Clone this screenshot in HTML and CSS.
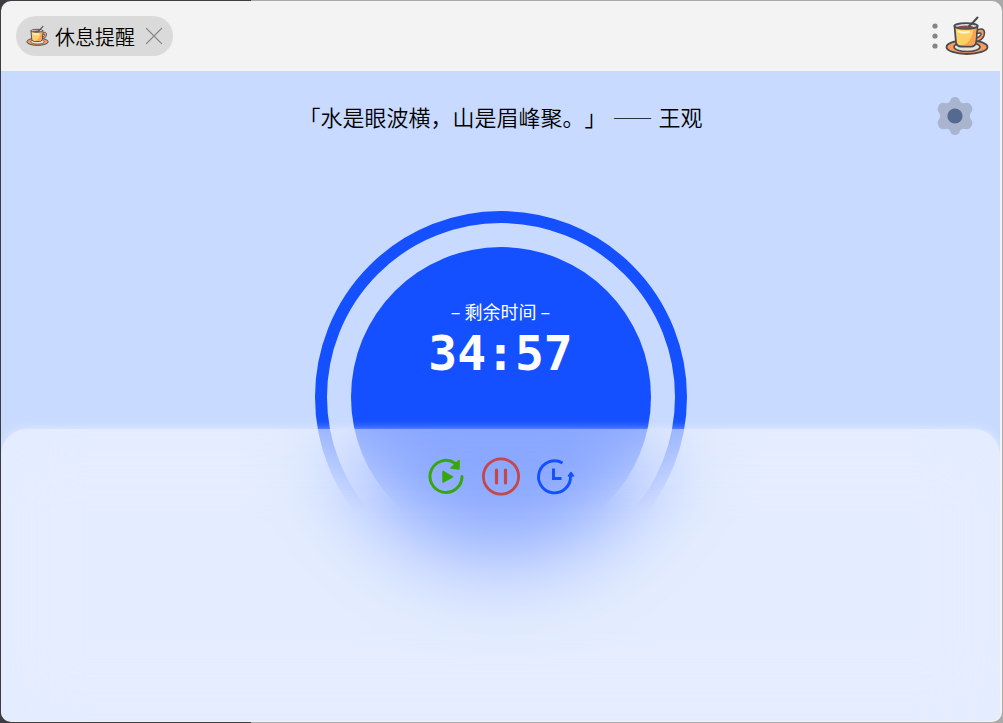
FILE: index.html
```
<!DOCTYPE html>
<html lang="zh-CN">
<head>
<meta charset="utf-8">
<meta name="viewport" content="width=device-width, initial-scale=1">
<title>休息提醒</title>
<link rel="stylesheet" href="styles.css">
</head>
<body>
<svg class="defs" aria-hidden="true">
  <symbol id="cup" viewBox="0 0 44 40">
    <ellipse cx="22" cy="31" rx="20.500" ry="7" fill="#f99b5c" stroke="#484b50" stroke-width="1.800"/>
    <ellipse cx="22" cy="31" rx="13" ry="4.500" fill="#e4e6d8" stroke="#484b50" stroke-width="1.500"/>
    <path d="M32 14.500Q34 12.500 37 13Q40.500 14 39 19.500Q37.500 24.500 31 25.500L31.500 22Q35 21 36 18.500Q36.500 16 32 17.500Z" fill="#f99b5c" stroke="#484b50" stroke-width="1.500"/>
    <path d="M9.500 10L11 26.500Q12 30.500 16 30.500H26Q30 30.500 31 26.500L32.500 10Z" fill="#ffd066" stroke="#484b50" stroke-width="1.800"/>
    <path d="M28.500 13L31.500 12.500L30 26.500Q29 29.500 26 29.500H18Q27 26 28.500 13Z" fill="#fba254"/>
    <ellipse cx="21" cy="10" rx="11.500" ry="2.800" fill="#dfe2dc" stroke="#484b50" stroke-width="1.800"/>
    <ellipse cx="20.500" cy="11" rx="8" ry="1.400" fill="#8a4b4b"/>
    <path d="M13.500 15.500Q18 17 24 16" fill="none" stroke="#fff8dc" stroke-width="2" stroke-linecap="round"/>
    <path d="M24 10L28 6.500L32.500 1.500" fill="none" stroke="#484b50" stroke-width="2" stroke-linecap="round"/>
  </symbol>
</svg>
<div class="window">
  <header class="titlebar">
    <div class="tab">
      <svg class="tab-icon" aria-hidden="true"><use href="#cup"/></svg>
      <span class="tab-title">休息提醒</span>
      <button class="icon-button" type="button" aria-label="关闭">
        <svg class="close-icon" viewBox="0 0 16 16"><path d="M1 1L15 15M15 1L1 15" stroke="#858585" stroke-width="1.200"/></svg>
      </button>
    </div>
    <div class="title-actions">
      <button class="icon-button" type="button" aria-label="更多">
        <svg class="more-icon" viewBox="0 0 6 26" fill="#858585"><circle cx="3" cy="3" r="2.600"/><circle cx="3" cy="13" r="2.600"/><circle cx="3" cy="23" r="2.600"/></svg>
      </button>
      <svg class="app-icon" aria-hidden="true"><use href="#cup"/></svg>
    </div>
  </header>
  <main class="content">
    <p class="quote">「水是眼波横，山是眉峰聚。」 <span class="dash">——</span> 王观</p>
    <button class="icon-button settings" type="button" aria-label="设置">
      <svg class="gear-icon" viewBox="0 0 38 40">
        <path d="M14.500 4Q15.500 1 19 1Q22.500 1 23.500 4Q25 8 29 7Q33.500 6 35.500 10Q37.500 14 35 16.500Q32.500 20 35 23.500Q37.500 26 35.500 30Q33.500 34 29 33Q25 32 23.500 36Q22.500 39 19 39Q15.500 39 14.500 36Q13 32 9 33Q4.500 34 2.500 30Q0.500 26 3 23.500Q5.500 20 3 16.500Q0.500 14 2.500 10Q4.500 6 9 7Q13 8 14.500 4Z" fill="#a9b4ce"/>
        <circle cx="19" cy="20" r="7.600" fill="#566a91"/>
      </svg>
    </button>
    <div class="ring">
      <div class="disc">
        <div class="label">– 剩余时间 –</div>
        <time class="time">34:57</time>
      </div>
    </div>
    <section class="panel" aria-label="计时控制">
      <div class="controls">
        <button class="icon-button" type="button" aria-label="开始">
          <svg class="control-icon" viewBox="0 0 40 40" fill="none" stroke="#36a80d" stroke-width="3" stroke-linecap="round">
            <path d="M35 19.500A16 16 0 1 1 28 6.200"/>
            <path d="M32 3.500V12L24 11Z" fill="#36a80d" stroke-width="1.500" stroke-linejoin="round"/>
            <path d="M16 14.500V25L25.500 19.800Z" fill="#36a80d" stroke-width="1.500" stroke-linejoin="round"/>
          </svg>
        </button>
        <button class="icon-button" type="button" aria-label="暂停">
          <svg class="control-icon" viewBox="0 0 40 40" fill="none" stroke="#c54747" stroke-width="2.800" stroke-linecap="round">
            <circle cx="20" cy="19.500" r="17.600"/>
            <path d="M15.500 13V26M24.500 13V26" stroke-width="3.200"/>
          </svg>
        </button>
        <button class="icon-button" type="button" aria-label="推迟">
          <svg class="control-icon" viewBox="0 0 40 40" fill="none" stroke="#1450ff" stroke-width="2.900">
            <path d="M27.500 6A16 16 0 1 0 35.500 19"/>
            <path d="M18.500 11.500V21.500H26.500" stroke-width="3"/>
            <path d="M36 15.500L38.500 19H33.500Z" fill="#1450ff" stroke-width="1.500" stroke-linejoin="round"/>
          </svg>
        </button>
      </div>
    </section>
  </main>
</div>
</body>
</html>
```
FILE: styles.css
```
* { box-sizing: border-box; }

body {
  margin: 0;
  min-height: 100vh;
  display: flex;
  padding: 1px;
  background: linear-gradient(90deg, #3c3c42 25%, #a9a9a9 25%);
  font-family: "Noto Sans CJK SC", sans-serif;
  color: #000;
}

.defs { position: absolute; width: 0; height: 0; }

.window {
  flex: 1;
  display: flex;
  flex-direction: column;
  padding: 0 2px 1px 0;
  border-radius: 10px;
  overflow: hidden;
  background: #f3f3f3;
}

.titlebar {
  flex: none;
  height: 70px;
  display: flex;
  align-items: center;
  justify-content: space-between;
  padding: 0 11px 0 15px;
}

.tab {
  display: flex;
  align-items: center;
  height: 40px;
  padding: 0 10px;
  border-radius: 20px;
  background: #dadada;
}

.tab-icon { width: 23px; height: 22px; }
.tab-title { margin: 0 10px 0 6px; font-size: 20px; font-weight: 350; }

.icon-button {
  display: flex;
  padding: 0;
  border: 0;
  background: none;
  cursor: pointer;
}

.close-icon { width: 18px; height: 18px; }
.title-actions { display: flex; align-items: center; gap: 7px; }
.more-icon { width: 6px; height: 26px; }
.app-icon { width: 44px; height: 40px; }

.content {
  flex: 1;
  position: relative;
  display: flex;
  flex-direction: column;
  align-items: center;
  overflow: hidden;
  border-radius: 0 0 10px 10px;
  background: #c8daff;
}

.quote {
  margin: 29px 0 0;
  font-size: 22px;
  line-height: 32px;
  font-weight: 350;
  text-spacing-trim: space-all;
}

.dash { margin: 0 1px; font-size: 20px; }

.settings { position: absolute; top: 25px; right: 26px; }
.gear-icon { width: 38px; height: 40px; }

.ring {
  flex: none;
  width: 372px;
  height: 372px;
  margin-top: 77px;
  display: flex;
  align-items: center;
  justify-content: center;
  border: 12px solid #1450ff;
  border-radius: 50%;
}

.disc {
  width: 300px;
  height: 300px;
  display: flex;
  flex-direction: column;
  align-items: center;
  padding-top: 50px;
  border-radius: 50%;
  background: #1450ff;
  color: #fff;
}

.label { font-size: 18px; line-height: 28px; }

.time {
  font-family: "DejaVu Sans Mono", monospace;
  font-size: 48px;
  line-height: 56px;
  font-weight: 700;
}

.panel {
  position: absolute;
  right: 0;
  bottom: 0;
  left: 0;
  height: 45%;
  padding-top: 28px;
  border-radius: 26px 26px 0 0;
  background: rgba(255, 255, 255, 0.5);
  box-shadow: 0 0 10px rgba(255, 255, 255, 0.5);
}

.panel::before {
  content: "";
  position: absolute;
  inset: 0;
  border-radius: inherit;
  backdrop-filter: blur(36px);
  mask-image: linear-gradient(rgba(0, 0, 0, 0.6), #000 80px);
}

.controls {
  position: relative;
  display: flex;
  justify-content: center;
  gap: 14px;
}

.control-icon { width: 40px; height: 40px; }
```
